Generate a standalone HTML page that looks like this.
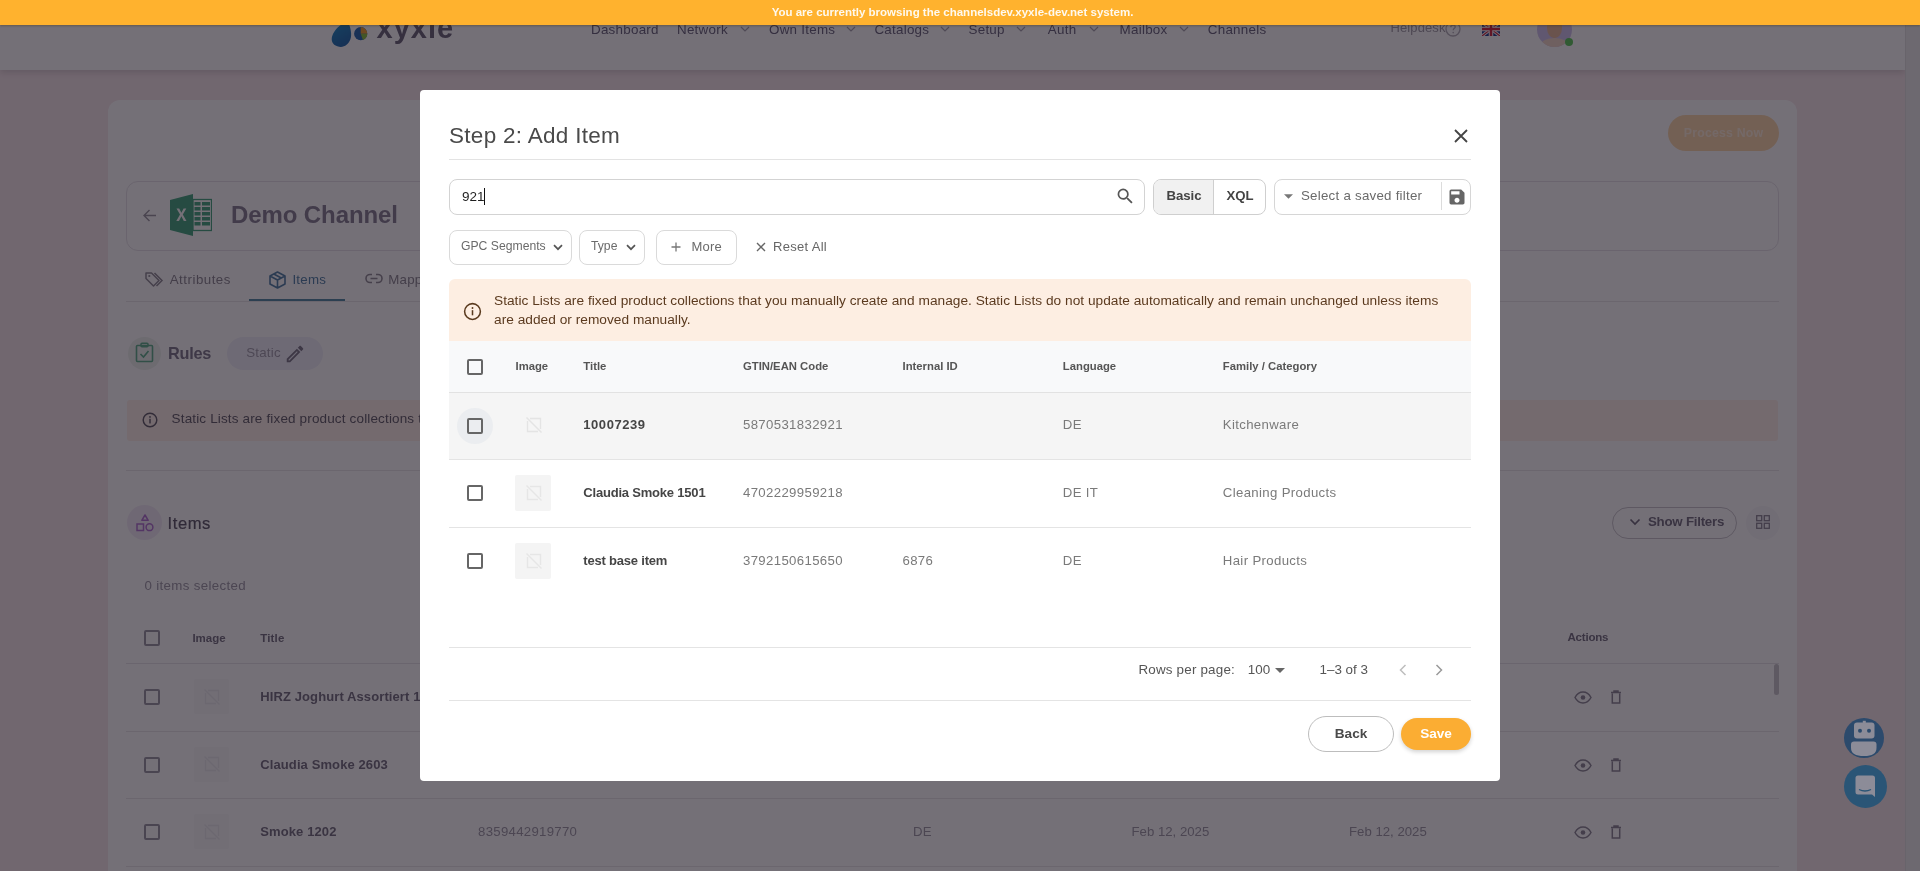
<!DOCTYPE html>
<html><head><meta charset="utf-8">
<style>
*{box-sizing:border-box;margin:0;padding:0}
html,body{width:1920px;height:871px;overflow:hidden}
body{font-family:"Liberation Sans",sans-serif;background:#f8e8ec;position:relative;color:#333}
.a{position:absolute;white-space:nowrap}
svg{display:block}
/* background page */
#nav{left:0;top:0;width:1905px;height:70px;background:#fff;box-shadow:0 3px 6px rgba(0,0,0,.12)}
#gutter{left:1905px;top:0;width:15px;height:871px;background:#efefef;border-left:1px solid #e2e2e2}
.nt{top:21px;font-size:13.4px;color:#67627a;line-height:16px}
#card{left:108px;top:100px;width:1689px;height:800px;background:#fff;border-radius:12px}
#overlay{left:0;top:0;width:1920px;height:871px;background:rgba(18,12,24,.588)}
#banner{left:0;top:0;width:1920px;height:25px;box-shadow:0 1px 2px rgba(60,40,0,.35);background:#ffb22e;color:#fff9ee;font-weight:bold;font-size:11.5px;text-align:center;line-height:25px;letter-spacing:0px;padding-right:15px}
/* modal */
#modal{left:420px;top:90px;width:1080px;height:691px;background:#fff;border-radius:4px}
.m{position:absolute;white-space:nowrap}
.btn{position:absolute;border:1px solid #d3d3d3;border-radius:8px;background:#fff}
.hd{font-size:11.3px;font-weight:bold;color:#555;letter-spacing:0px}
.cb{position:absolute;width:16px;height:16px;border:2px solid #666;border-radius:2px}
.row{position:absolute;left:29px;width:1022px;height:68px;border-bottom:1px solid #e4e4e4}
.ttl{font-size:13px;font-weight:bold;color:#454545;letter-spacing:-0.2px}
.cell{font-size:13.2px;color:#7a7a7a;letter-spacing:0.35px}
.imgph{position:absolute;left:66px;top:15px;width:36px;height:36px;background:#f4f4f4;border-radius:2px}
.cbb{width:16px;height:16px;border:2px solid #9a96a4;border-radius:2px}
.bh{font-size:11.5px;font-weight:bold;line-height:14px;color:#736e7f;letter-spacing:0.15px}
.bc{font-size:13.2px;line-height:16px;color:#9d99a6;letter-spacing:0.3px}
.bd{letter-spacing:0px}
</style></head><body><div id="root" style="position:absolute;left:0;top:0;width:1920px;height:871px;will-change:transform">
<!-- ============ BACKGROUND PAGE ============ -->
<div id="nav" class="a"></div>
<div id="gutter" class="a"></div>
<div id="card" class="a"></div>

<!-- nav content -->
<svg class="a" style="left:330px;top:14px" width="46" height="36" viewBox="0 0 46 36">
  <defs><linearGradient id="lg1" x1="0" y1="0" x2="1" y2="1"><stop offset="0" stop-color="#1a8fc8"/><stop offset="1" stop-color="#1d5fa8"/></linearGradient></defs>
  <path d="M12 6 C6 12 3.5 20 4 26 C4.5 31 8 34 13 33.5 C19 33 22.5 28 22 22 C21.5 16 17 11 12 6Z" fill="url(#lg1)" transform="rotate(25 13 20)"/>
  <path d="M10 5 L16 3 L20 9 L14 11Z" fill="#e0502a"/>
  <circle cx="30.7" cy="19.7" r="6.6" fill="#2266b0"/>
  <path d="M30.7 13.1 A6.6 6.6 0 0 1 37.3 19.7 L30.7 19.7Z" fill="#f0a030"/>
  <path d="M37.3 19.7 A6.6 6.6 0 0 1 33 25.9 L30.7 19.7Z" fill="#8cbf3c"/>
</svg>
<div class="a" style="left:376.5px;top:10px;font-size:29px;font-weight:bold;line-height:36px;color:#6a6478;letter-spacing:1px">xyxle</div>
<div class="a nt" style="left:591px;top:21.5px;letter-spacing:0.25px">Dashboard</div>
<div class="a nt" style="left:677px;top:21.5px;letter-spacing:0.25px">Network</div>
<div class="a nt" style="left:769px;top:21.5px;letter-spacing:0.25px">Own Items</div>
<div class="a nt" style="left:874.4px;top:21.5px;letter-spacing:0.25px">Catalogs</div>
<div class="a nt" style="left:968.5px;top:21.5px;letter-spacing:0.25px">Setup</div>
<div class="a nt" style="left:1047.8px;top:21.5px;letter-spacing:0.25px">Auth</div>
<div class="a nt" style="left:1119.6px;top:21.5px;letter-spacing:0.25px">Mailbox</div>
<div class="a nt" style="left:1207.8px;top:21.5px;letter-spacing:0.25px">Channels</div>
<svg class="a" style="left:740px;top:26px" width="10" height="6" viewBox="0 0 10 6"><path d="M1 1L5 5L9 1" fill="none" stroke="#a8a4ae" stroke-width="1.2"/></svg>
<svg class="a" style="left:846px;top:26px" width="10" height="6" viewBox="0 0 10 6"><path d="M1 1L5 5L9 1" fill="none" stroke="#a8a4ae" stroke-width="1.2"/></svg>
<svg class="a" style="left:939.5px;top:26px" width="10" height="6" viewBox="0 0 10 6"><path d="M1 1L5 5L9 1" fill="none" stroke="#a8a4ae" stroke-width="1.2"/></svg>
<svg class="a" style="left:1016px;top:26px" width="10" height="6" viewBox="0 0 10 6"><path d="M1 1L5 5L9 1" fill="none" stroke="#a8a4ae" stroke-width="1.2"/></svg>
<svg class="a" style="left:1088.5px;top:26px" width="10" height="6" viewBox="0 0 10 6"><path d="M1 1L5 5L9 1" fill="none" stroke="#a8a4ae" stroke-width="1.2"/></svg>
<svg class="a" style="left:1179px;top:26px" width="10" height="6" viewBox="0 0 10 6"><path d="M1 1L5 5L9 1" fill="none" stroke="#a8a4ae" stroke-width="1.2"/></svg>
<div class="a" style="left:1390.5px;top:20px;font-size:13px;line-height:16px;color:#a09ca6;letter-spacing:0.1px">Helpdesk</div>
<svg class="a" style="left:1445px;top:21px" width="16" height="16" viewBox="0 0 16 16"><circle cx="8" cy="8" r="7" fill="none" stroke="#b3afb8" stroke-width="1.3"/><path d="M5.8 6.2 C5.8 4.8 6.8 4 8 4 C9.3 4 10.2 4.8 10.2 5.9 C10.2 7.3 8.2 7.4 8.2 9.3" fill="none" stroke="#b3afb8" stroke-width="1.3"/><circle cx="8.2" cy="11.6" r="0.8" fill="#b3afb8"/></svg>
<svg class="a" style="left:1482px;top:22px" width="18" height="14" viewBox="0 0 18 14"><rect width="18" height="14" fill="#1f3a8a"/><path d="M0 0L18 14M18 0L0 14" stroke="#fff" stroke-width="3"/><path d="M0 0L18 14M18 0L0 14" stroke="#d0263a" stroke-width="1.2"/><path d="M9 0V14M0 7H18" stroke="#fff" stroke-width="4.5"/><path d="M9 0V14M0 7H18" stroke="#d0263a" stroke-width="2.5"/></svg>
<div class="a" style="left:1537px;top:12px;width:35px;height:35px;border-radius:50%;background:#cfc3ee;overflow:hidden">
  <div style="position:absolute;left:10px;top:4px;width:15px;height:22px;border-radius:45%;background:#e6b89a"></div>
  <div style="position:absolute;left:4px;top:26px;width:27px;height:14px;border-radius:50% 50% 0 0;background:#f3d8c8"></div>
</div>
<div class="a" style="left:1564.5px;top:38.2px;width:8px;height:8px;border-radius:50%;background:#5cc95a"></div>

<!-- card content -->
<div class="a" style="left:1668px;top:115px;width:111px;height:36px;border-radius:18px;background:#fdd8ab;color:rgba(255,255,255,.55);font-weight:bold;font-size:12.3px;line-height:36px;text-align:center;letter-spacing:0.2px">Process Now</div>
<div class="a" style="left:126px;top:181px;width:1653px;height:70px;border:1px solid #e6e3e8;border-radius:12px"></div>
<svg class="a" style="left:143px;top:209px" width="14" height="13" viewBox="0 0 14 13"><path d="M13 6.5H1.5M6.5 1L1 6.5L6.5 12" fill="none" stroke="#9a96a0" stroke-width="1.4"/></svg>
<svg class="a" style="left:170px;top:194px" width="42" height="42" viewBox="0 0 42 42">
  <path d="M0 6 L23 0 L23 42 L0 36Z" fill="#42a57e"/>
  <rect x="23" y="5.5" width="18.5" height="31" fill="none" stroke="#42a57e" stroke-width="1.3"/>
  <g fill="#42a57e"><rect x="24.5" y="8" width="6" height="3.5"/><rect x="32" y="8" width="8" height="3.5"/><rect x="24.5" y="13" width="6" height="3.5"/><rect x="32" y="13" width="8" height="3.5"/><rect x="24.5" y="18" width="6" height="3.5"/><rect x="32" y="18" width="8" height="3.5"/><rect x="24.5" y="23" width="6" height="3.5"/><rect x="32" y="23" width="8" height="3.5"/><rect x="24.5" y="28" width="6" height="3.5"/><rect x="32" y="28" width="8" height="3.5"/></g>
  <path d="M6.5 14.5L10 20.5L6.3 27H9L11.4 22.3L13.8 27H16.5L12.8 20.5L16.3 14.5H13.6L11.4 18.7L9.2 14.5Z" fill="#fff"/>
</svg>
<div class="a" style="left:231px;top:201px;font-size:24px;font-weight:bold;line-height:28px;color:#857f93;letter-spacing:-0.1px">Demo Channel</div>
<!-- tabs -->
<svg class="a" style="left:145px;top:271px" width="19" height="17" viewBox="0 0 19 17"><path d="M1 2V7.5L8.5 15L14 9.5L6.5 2Z" fill="none" stroke="#8f8b95" stroke-width="1.5" stroke-linejoin="round"/><circle cx="4.3" cy="5" r="1.1" fill="#8f8b95"/><path d="M9.5 2L17 9.5L11.5 15" fill="none" stroke="#8f8b95" stroke-width="1.5"/></svg>
<div class="a" style="left:169.75px;top:272px;font-size:13.3px;line-height:16px;color:#8a8690;letter-spacing:0.5px">Attributes</div>
<svg class="a" style="left:269px;top:270.5px" width="17" height="18" viewBox="0 0 17 18"><path d="M8.5 1L16 5V13L8.5 17L1 13V5Z M1 5L8.5 9L16 5 M8.5 9V17 M4.8 3L12.3 7" fill="none" stroke="#4f7fa5" stroke-width="1.6" stroke-linejoin="round"/></svg>
<div class="a" style="left:292.4px;top:272px;font-size:13.3px;line-height:16px;color:#4f7fa5;letter-spacing:0.25px">Items</div>
<svg class="a" style="left:364.5px;top:273px" width="18" height="11" viewBox="0 0 18 11"><path d="M7 1.5H5A4 4 0 0 0 5 9.5H7 M11 1.5H13A4 4 0 0 1 13 9.5H11 M5.5 5.5H12.5" fill="none" stroke="#8f8b95" stroke-width="1.6"/></svg>
<div class="a" style="left:388.2px;top:272px;font-size:13.3px;line-height:16px;color:#8a8690;letter-spacing:0.25px">Mappings</div>
<div class="a" style="left:126px;top:300.5px;width:1653px;height:1px;background:#e8e6ea"></div>
<div class="a" style="left:249px;top:299px;width:96px;height:2px;background:#5089a2"></div>
<!-- rules -->
<div class="a" style="left:128px;top:336.5px;width:33px;height:33px;border-radius:50%;background:#eef3ee"></div>
<svg class="a" style="left:135px;top:342px" width="19" height="21" viewBox="0 0 19 21"><rect x="1.5" y="3.5" width="16" height="16" rx="1" fill="none" stroke="#5cae8a" stroke-width="1.6"/><rect x="6" y="1.2" width="7" height="3.5" rx="1" fill="none" stroke="#5cae8a" stroke-width="1.5"/><path d="M5.5 12L8.5 15L13.5 9" fill="none" stroke="#5cae8a" stroke-width="1.6"/></svg>
<div class="a" style="left:168px;top:343.5px;font-size:16.3px;font-weight:bold;line-height:19px;color:#7d788b;letter-spacing:-0.25px">Rules</div>
<div class="a" style="left:227px;top:337px;width:96px;height:33px;border-radius:17px;background:#f0f0fa"></div>
<div class="a" style="left:246.3px;top:345px;font-size:13.3px;line-height:16px;color:#a19dab;letter-spacing:0.2px">Static</div>
<svg class="a" style="left:283.7px;top:343px" width="22" height="22" viewBox="0 0 24 24"><path fill="#7a7686" d="M3 17.25V21h3.75L17.81 9.94l-3.75-3.75L3 17.25zM5.92 19H5v-.92l9.06-9.06.92.92L5.92 19zM20.71 5.63l-2.34-2.34c-.2-.2-.45-.29-.71-.29s-.51.1-.7.29l-1.83 1.83 3.75 3.75 1.83-1.83a.996.996 0 0 0 0-1.41z"/></svg>
<!-- bg alert -->
<div class="a" style="left:127px;top:399.5px;width:1651px;height:41px;background:#fff0e8;border-radius:3px"></div>
<svg class="a" style="left:141.5px;top:411.5px" width="16" height="16" viewBox="0 0 20 20"><circle cx="10" cy="10" r="8.5" fill="none" stroke="#5f5a66" stroke-width="1.8"/><rect x="9.1" y="8.5" width="1.8" height="5.8" fill="#5f5a66"/><circle cx="10" cy="6.2" r="1.1" fill="#5f5a66"/></svg>
<div class="a" style="left:171.6px;top:411px;font-size:13.5px;line-height:16px;color:#5f5a66;letter-spacing:0.15px">Static Lists are fixed product collections that you manually create and manage.</div>
<div class="a" style="left:126px;top:469.5px;width:1653px;height:1px;background:#e8e6ea"></div>
<!-- items header -->
<div class="a" style="left:127px;top:505px;width:35px;height:35px;border-radius:50%;background:#f3ecf8"></div>
<svg class="a" style="left:135.5px;top:513.5px" width="18" height="18" viewBox="0 0 18 18"><path d="M9 1L12.2 6.3H5.8Z" fill="none" stroke="#b070d0" stroke-width="1.5" stroke-linejoin="round"/><rect x="1" y="10" width="6.5" height="6.5" fill="none" stroke="#b070d0" stroke-width="1.5"/><circle cx="13.5" cy="13.2" r="3.4" fill="none" stroke="#b070d0" stroke-width="1.5"/></svg>
<div class="a" style="left:167.6px;top:514px;font-size:16.6px;line-height:19px;color:#5a5566;letter-spacing:0.55px;-webkit-text-stroke:0.2px #5a5566">Items</div>
<div class="a" style="left:1612px;top:506.5px;width:125px;height:32.5px;border:1px solid #c9c6cc;border-radius:17px"></div>
<svg class="a" style="left:1629px;top:517.5px" width="12" height="8" viewBox="0 0 12 8"><path d="M1.5 1.5L6 6L10.5 1.5" fill="none" stroke="#6e6a7a" stroke-width="1.7"/></svg>
<div class="a" style="left:1648px;top:513.5px;font-size:13.3px;font-weight:bold;line-height:16px;color:#736e7f;letter-spacing:-0.25px">Show Filters</div>
<div class="a" style="left:1746px;top:505.5px;width:34px;height:34px;border-radius:50%;background:#f8f7fa"></div>
<svg class="a" style="left:1755.5px;top:515px" width="14" height="14" viewBox="0 0 14 14"><g fill="none" stroke="#8a8694" stroke-width="1.3"><rect x="0.7" y="0.7" width="5" height="5"/><rect x="8.3" y="0.7" width="5" height="5"/><rect x="0.7" y="8.3" width="5" height="5"/><rect x="8.3" y="8.3" width="5" height="5"/></g></svg>
<div class="a" style="left:144.4px;top:578px;font-size:13.3px;line-height:16px;color:#9d99a6;letter-spacing:0.35px">0 items selected</div>
<!-- bg table -->
<div class="a" style="left:126px;top:663px;width:1653px;height:1px;background:#e6e4e8"></div>
<div class="cbb a" style="left:144px;top:630px"></div>
<div class="a bh" style="left:192.4px;top:630.5px;letter-spacing:0px">Image</div>
<div class="a bh" style="left:260.3px;top:630.5px">Title</div>
<div class="a bh" style="left:1567.5px;top:629.5px;letter-spacing:-0.2px">Actions</div>
<div class="a" style="left:1774px;top:664px;width:5px;height:31px;border-radius:3px;background:#c9c7cc"></div>
<div class="a" style="left:126px;top:730.5px;width:1653px;height:1px;background:#e8e6ea"></div>
<div class="cbb a" style="left:144px;top:689.0px"></div>
<div class="a" style="left:194px;top:679.0px;width:35px;height:35px;background:#fafafb;border-radius:2px"></div>
<svg class="a" style="left:203px;top:687.5px" width="18" height="18" viewBox="0 0 18 18"><path d="M5 2.5H15.5V13 M2.5 5V15.5H13" fill="none" stroke="#ececef" stroke-width="1.4"/><path d="M1.5 1.5L16.5 16.5" stroke="#ececef" stroke-width="1.4"/></svg>
<div class="a" style="left:260.3px;top:689.0px;font-size:13px;font-weight:bold;line-height:16px;color:#736e7f;letter-spacing:0.1px">HIRZ Joghurt Assortiert 180g</div>
<svg class="a" style="left:1574px;top:691.0px" width="18" height="13" viewBox="0 0 18 13"><path d="M1 6.5C3 2.8 5.8 1 9 1S15 2.8 17 6.5C15 10.2 12.2 12 9 12S3 10.2 1 6.5Z" fill="none" stroke="#8a8694" stroke-width="1.5"/><circle cx="9" cy="6.5" r="2.3" fill="#8a8694"/></svg>
<svg class="a" style="left:1610px;top:690.0px" width="12" height="14" viewBox="0 0 12 14"><path d="M1 2.5H11 M4 2.5V1H8V2.5 M2.3 3.5V13H9.7V3.5" fill="none" stroke="#8a8694" stroke-width="1.5"/></svg>
<div class="a" style="left:126px;top:798.0px;width:1653px;height:1px;background:#e8e6ea"></div>
<div class="cbb a" style="left:144px;top:756.5px"></div>
<div class="a" style="left:194px;top:746.5px;width:35px;height:35px;background:#fafafb;border-radius:2px"></div>
<svg class="a" style="left:203px;top:755.0px" width="18" height="18" viewBox="0 0 18 18"><path d="M5 2.5H15.5V13 M2.5 5V15.5H13" fill="none" stroke="#ececef" stroke-width="1.4"/><path d="M1.5 1.5L16.5 16.5" stroke="#ececef" stroke-width="1.4"/></svg>
<div class="a" style="left:260.3px;top:756.5px;font-size:13px;font-weight:bold;line-height:16px;color:#736e7f;letter-spacing:0.1px">Claudia Smoke 2603</div>
<svg class="a" style="left:1574px;top:758.5px" width="18" height="13" viewBox="0 0 18 13"><path d="M1 6.5C3 2.8 5.8 1 9 1S15 2.8 17 6.5C15 10.2 12.2 12 9 12S3 10.2 1 6.5Z" fill="none" stroke="#8a8694" stroke-width="1.5"/><circle cx="9" cy="6.5" r="2.3" fill="#8a8694"/></svg>
<svg class="a" style="left:1610px;top:757.5px" width="12" height="14" viewBox="0 0 12 14"><path d="M1 2.5H11 M4 2.5V1H8V2.5 M2.3 3.5V13H9.7V3.5" fill="none" stroke="#8a8694" stroke-width="1.5"/></svg>
<div class="a" style="left:126px;top:865.5px;width:1653px;height:1px;background:#e8e6ea"></div>
<div class="cbb a" style="left:144px;top:824.0px"></div>
<div class="a" style="left:194px;top:814.0px;width:35px;height:35px;background:#fafafb;border-radius:2px"></div>
<svg class="a" style="left:203px;top:822.5px" width="18" height="18" viewBox="0 0 18 18"><path d="M5 2.5H15.5V13 M2.5 5V15.5H13" fill="none" stroke="#ececef" stroke-width="1.4"/><path d="M1.5 1.5L16.5 16.5" stroke="#ececef" stroke-width="1.4"/></svg>
<div class="a" style="left:260.3px;top:824.0px;font-size:13px;font-weight:bold;line-height:16px;color:#736e7f;letter-spacing:0.1px">Smoke 1202</div>
<svg class="a" style="left:1574px;top:826.0px" width="18" height="13" viewBox="0 0 18 13"><path d="M1 6.5C3 2.8 5.8 1 9 1S15 2.8 17 6.5C15 10.2 12.2 12 9 12S3 10.2 1 6.5Z" fill="none" stroke="#8a8694" stroke-width="1.5"/><circle cx="9" cy="6.5" r="2.3" fill="#8a8694"/></svg>
<svg class="a" style="left:1610px;top:825.0px" width="12" height="14" viewBox="0 0 12 14"><path d="M1 2.5H11 M4 2.5V1H8V2.5 M2.3 3.5V13H9.7V3.5" fill="none" stroke="#8a8694" stroke-width="1.5"/></svg>
<div class="a bc" style="left:478px;top:824.0px">8359442919770</div>
<div class="a bc" style="left:913px;top:824.0px">DE</div>
<div class="a bc bd" style="left:1131.5px;top:824.0px">Feb 12, 2025</div>
<div class="a bc bd" style="left:1349px;top:824.0px">Feb 12, 2025</div>



<!-- overlay -->
<div id="overlay" class="a"></div>

<!-- ============ MODAL ============ -->
<div id="modal" class="a">
  <div class="m" style="left:29px;top:33px;font-size:22.5px;color:#4a4a4a;letter-spacing:0.3px">Step 2: Add Item</div>
  <svg class="m" style="left:1034px;top:39px" width="14" height="14" viewBox="0 0 14 14"><path d="M1 1L13 13M13 1L1 13" stroke="#444" stroke-width="1.8"/></svg>
  <div class="m" style="left:29px;top:69px;width:1022px;height:1px;background:#e3e3e3"></div>

  <!-- search -->
  <div class="btn" style="left:29px;top:88.5px;width:696px;height:36.5px"></div>
  <div class="m" style="left:42px;top:98.5px;font-size:13.5px;color:#1f1f1f;line-height:16px">921</div>
  <div class="m" style="left:63.5px;top:98px;width:1px;height:17px;background:#111"></div>
  <svg class="m" style="left:695px;top:96px" width="20.6" height="20.6" viewBox="0 0 24 24"><path fill="#555" d="M15.5 14h-.79l-.28-.27A6.471 6.471 0 0 0 16 9.5 6.5 6.5 0 1 0 9.5 16c1.61 0 3.09-.59 4.23-1.57l.27.28v.79l5 4.99L20.49 19l-4.99-5zm-6 0C7.01 14 5 11.99 5 9.5S7.01 5 9.5 5 14 7.01 14 9.5 11.99 14 9.5 14z"/></svg>
  <!-- basic / xql -->
  <div class="btn" style="left:733px;top:88.5px;width:113px;height:36.5px;overflow:hidden;border-color:#cfcfcf">
    <div style="position:absolute;left:0;top:0;width:60px;height:100%;background:#f1f1f1;border-right:1px solid #cfcfcf"></div>
    <div class="m" style="left:0;top:8.5px;width:60px;text-align:center;font-size:13.2px;font-weight:bold;color:#444;line-height:16px">Basic</div>
    <div class="m" style="left:60px;top:8.5px;width:52px;text-align:center;font-size:13.2px;font-weight:bold;color:#444;line-height:16px">XQL</div>
  </div>
  <!-- saved filter -->
  <div class="btn" style="left:854px;top:88.5px;width:197px;height:36.5px;border-color:#d6d6d6"></div>
  <svg class="m" style="left:864px;top:104px" width="9" height="5" viewBox="0 0 10 5"><path d="M0 0L10 0L5 5z" fill="#777"/></svg>
  <div class="m" style="left:881px;top:98px;font-size:13.3px;color:#6a6a6a;letter-spacing:0.25px;line-height:16px">Select a saved filter</div>
  <div class="m" style="left:1021px;top:92px;width:1px;height:28px;background:#dcdcdc"></div>
  <svg class="m" style="left:1027px;top:97px" width="20" height="20" viewBox="0 0 24 24"><path fill="#666" d="M17 3H5a2 2 0 0 0-2 2v14a2 2 0 0 0 2 2h14c1.1 0 2-.9 2-2V7l-4-4zm-5 16c-1.66 0-3-1.34-3-3s1.34-3 3-3 3 1.34 3 3-1.34 3-3 3zm3-10H5V5h10v4z"/></svg>
  <!-- filter chips -->
  <div class="btn" style="left:29px;top:139.5px;width:123px;height:35.5px;border-color:#dadada"></div>
  <div class="m" style="left:41px;top:149px;font-size:12.2px;color:#6b6b6b;line-height:15px">GPC Segments</div>
  <svg class="m" style="left:133px;top:154px" width="10" height="7" viewBox="0 0 10 7"><path d="M1 1.2L5 5.2L9 1.2" fill="none" stroke="#555" stroke-width="1.7"/></svg>
  <div class="btn" style="left:159px;top:139.5px;width:66px;height:35.5px;border-color:#dadada"></div>
  <div class="m" style="left:171px;top:149px;font-size:12.2px;color:#6b6b6b;line-height:15px">Type</div>
  <svg class="m" style="left:206px;top:154px" width="10" height="7" viewBox="0 0 10 7"><path d="M1 1.2L5 5.2L9 1.2" fill="none" stroke="#555" stroke-width="1.7"/></svg>
  <div class="btn" style="left:236px;top:139.5px;width:81px;height:35.5px;border-color:#dadada"></div>
  <svg class="m" style="left:251px;top:152px" width="10" height="10" viewBox="0 0 10 10"><path d="M5 0.5V9.5M0.5 5H9.5" stroke="#777" stroke-width="1.3"/></svg>
  <div class="m" style="left:271.5px;top:149px;font-size:13px;color:#6b6b6b;line-height:15px;letter-spacing:0.2px">More</div>
  <svg class="m" style="left:336px;top:152px" width="10" height="10" viewBox="0 0 10 10"><path d="M1 1L9 9M9 1L1 9" stroke="#666" stroke-width="1.4"/></svg>
  <div class="m" style="left:353px;top:149px;font-size:13px;color:#666;line-height:15px;letter-spacing:0.3px">Reset All</div>
  <!-- alert -->
  <div class="m" style="left:29px;top:189px;width:1022px;height:62px;background:#fdeee2;border-radius:6px 6px 0 0"></div>
  <svg class="m" style="left:43px;top:211.5px" width="19" height="19" viewBox="0 0 20 20"><circle cx="10" cy="10" r="8.3" fill="none" stroke="#5a3a1e" stroke-width="1.6"/><rect x="9.2" y="8.6" width="1.6" height="5.4" fill="#5a3a1e"/><circle cx="10" cy="6.3" r="1" fill="#5a3a1e"/></svg>
  <div class="m" style="left:74px;top:201px;font-size:13.7px;line-height:19px;color:#5b3a1f;letter-spacing:0.02px;white-space:normal;width:960px">Static Lists are fixed product collections that you manually create and manage. Static Lists do not update automatically and remain unchanged unless items are added or removed manually.</div>
  <!-- table header -->
  <div class="m" style="left:29px;top:251px;width:1022px;height:52px;background:#f8f9fa;border-bottom:1px solid #e2e2e2"></div>
  <div class="cb" style="left:47px;top:269px"></div>
  <div class="m hd" style="left:95.5px;top:270px">Image</div>
  <div class="m hd" style="left:163.3px;top:270px">Title</div>
  <div class="m hd" style="left:323px;top:270px">GTIN/EAN Code</div>
  <div class="m hd" style="left:482.5px;top:270px">Internal ID</div>
  <div class="m hd" style="left:642.8px;top:270px">Language</div>
  <div class="m hd" style="left:802.8px;top:270px">Family / Category</div>
  <!-- rows -->
  <div class="row" style="top:303px;height:67px;background:#f5f5f5">
    <div class="m" style="left:0;top:14px;width:36px;height:36px"></div>
    <div class="m" style="left:7.5px;top:14.5px;width:36px;height:36px;border-radius:50%;background:#ebedf0"></div>
    <div class="cb" style="left:18px;top:25px"></div>
    <svg class="m" style="left:76px;top:23px" width="18" height="18" viewBox="0 0 18 18"><path d="M5 2.5H15.5V13 M2.5 5V15.5H13" fill="none" stroke="#e4e4e4" stroke-width="1.4"/><path d="M1.5 1.5L16.5 16.5" stroke="#e4e4e4" stroke-width="1.4"/></svg>
    <div class="m ttl" style="left:134.3px;top:23.5px;letter-spacing:0.55px">10007239</div>
    <div class="m cell" style="left:294px;top:23.5px">5870531832921</div>
    <div class="m cell" style="left:613.8px;top:23.5px">DE</div>
    <div class="m cell" style="left:773.8px;top:23.5px">Kitchenware</div>
  </div>
  <div class="row" style="top:370px">
    <div class="cb" style="left:18px;top:25px"></div>
    <div class="imgph"></div>
    <svg class="m" style="left:76px;top:24px" width="18" height="18" viewBox="0 0 18 18"><path d="M5 2.5H15.5V13 M2.5 5V15.5H13" fill="none" stroke="#e6e6e6" stroke-width="1.4"/><path d="M1.5 1.5L16.5 16.5" stroke="#e6e6e6" stroke-width="1.4"/></svg>
    <div class="m ttl" style="left:134.3px;top:24.5px">Claudia Smoke 1501</div>
    <div class="m cell" style="left:294px;top:24.5px">4702229959218</div>
    <div class="m cell" style="left:613.8px;top:24.5px">DE IT</div>
    <div class="m cell" style="left:773.8px;top:24.5px">Cleaning Products</div>
  </div>
  <div class="row" style="top:438px;border-bottom:none">
    <div class="cb" style="left:18px;top:25px"></div>
    <div class="imgph"></div>
    <svg class="m" style="left:76px;top:24px" width="18" height="18" viewBox="0 0 18 18"><path d="M5 2.5H15.5V13 M2.5 5V15.5H13" fill="none" stroke="#e6e6e6" stroke-width="1.4"/><path d="M1.5 1.5L16.5 16.5" stroke="#e6e6e6" stroke-width="1.4"/></svg>
    <div class="m ttl" style="left:134.3px;top:24.5px">test base item</div>
    <div class="m cell" style="left:294px;top:24.5px">3792150615650</div>
    <div class="m cell" style="left:453.5px;top:24.5px">6876</div>
    <div class="m cell" style="left:613.8px;top:24.5px">DE</div>
    <div class="m cell" style="left:773.8px;top:24.5px">Hair Products</div>
  </div>
  <!-- pagination -->
  <div class="m" style="left:29px;top:557px;width:1022px;height:1px;background:#e4e4e4"></div>
  <div class="m" style="left:29px;top:610px;width:1022px;height:1px;background:#e4e4e4"></div>
  <div class="m" style="left:718.4px;top:572px;font-size:13.4px;color:#555;line-height:16px;letter-spacing:0.2px">Rows per page:</div>
  <div class="m" style="left:827.8px;top:572px;font-size:13.4px;color:#555;line-height:16px">100</div>
  <svg class="m" style="left:855px;top:578px" width="10" height="5" viewBox="0 0 10 5"><path d="M0 0L10 0L5 5z" fill="#666"/></svg>
  <div class="m" style="left:899.5px;top:572px;font-size:13.4px;color:#555;line-height:16px;letter-spacing:0px">1–3 of 3</div>
  <svg class="m" style="left:979px;top:574px" width="8" height="12" viewBox="0 0 8 12"><path d="M6.5 1L1.5 6L6.5 11" fill="none" stroke="#bdbdbd" stroke-width="1.5"/></svg>
  <svg class="m" style="left:1014.5px;top:574px" width="8" height="12" viewBox="0 0 8 12"><path d="M1.5 1L6.5 6L1.5 11" fill="none" stroke="#9a9a9a" stroke-width="1.5"/></svg>
  <!-- buttons -->
  <div class="m" style="left:888px;top:626px;width:86px;height:36px;border:1px solid #bdbdbd;border-radius:18px;font-size:13.6px;font-weight:bold;color:#4a4a4a;text-align:center;line-height:34px">Back</div>
  <div class="m" style="left:981px;top:628px;width:70px;height:32px;background:#fbad33;border-radius:16px;font-size:13.6px;font-weight:bold;color:#fff;text-align:center;line-height:31px;box-shadow:0 2px 4px rgba(0,0,0,.18)">Save</div>
</div>

<div class="a" style="left:1844px;top:718px;width:40px;height:40px;border-radius:50%;background:#2c4a6c"></div>
<svg class="a" style="left:1844px;top:718px" width="40" height="40" viewBox="0 0 40 40"><rect x="10" y="4.5" width="20.5" height="16" rx="3" fill="#8c8c98"/><rect x="18.8" y="2.8" width="3" height="3" fill="#8c8c98"/><circle cx="16" cy="12.7" r="2" fill="#2c4a6c"/><circle cx="25" cy="12.7" r="2" fill="#2c4a6c"/><path d="M7 26.5Q7 23.5 10 23.5H29.5Q32.5 23.5 32.5 26.5V30Q32.5 38 20 38Q7 38 7 30Z" fill="#8c8c98"/></svg>
<div class="a" style="left:1844px;top:765px;width:43px;height:43px;border-radius:50%;background:#2a5576"></div>
<svg class="a" style="left:1844px;top:765px" width="43" height="43" viewBox="0 0 43 43"><path d="M11.5 13Q11.5 10.5 14 10.5H28.5Q31 10.5 31 13V32L28 29.5H14Q11.5 29.5 11.5 27Z" fill="#8c8c98"/><path d="M15 24.5Q21 27.5 27 24.5" fill="none" stroke="#2a5576" stroke-width="1.3"/></svg>
<div id="banner" class="a">You are currently browsing the channelsdev.xyxle-dev.net system.</div>
</div></body></html>
